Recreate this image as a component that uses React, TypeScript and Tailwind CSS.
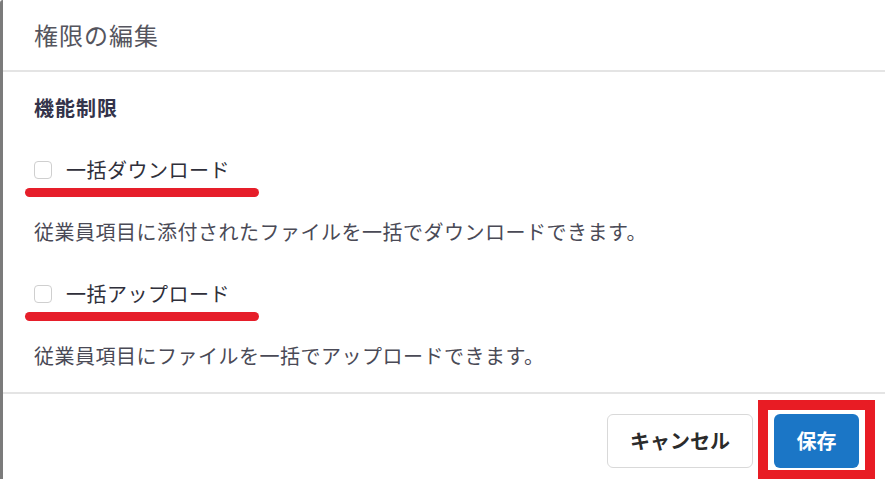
const font = { fontFamily: '"Noto Sans CJK JP", "Noto Sans", sans-serif' };

function Option({ label, description }: { label: string; description: string }) {
  return (
    <div>
      <div className="relative flex h-[28px] items-center">
        <span className="h-[18px] w-[18px] shrink-0 rounded-[4px] border border-[#cfcfcf] bg-white" />
        <span className="ml-[14px] text-[20px] leading-[28px] tracking-[0.5px] text-[#2f2f3a]">{label}</span>
        {/* annotation underline */}
        <span className="absolute left-[-9px] top-[32px] h-[9px] w-[234px] rounded-full bg-[#e61e2a]" />
      </div>
      <p className="mt-[34px] text-[20px] leading-[28px] tracking-[0.5px] text-[#4a4a56]">{description}</p>
    </div>
  );
}

export default function App() {
  return (
    <div className="flex h-[479px] w-[885px] overflow-hidden bg-white" style={font}>
      <div className="w-[3px] shrink-0 rounded-tl-[3px] bg-[#7b7b7b]" />
      <div className="flex flex-1 flex-col">
        <header className="flex h-[72px] items-center border-b-2 border-[#e4e4e4] pl-[31px]">
          <h1 className="text-[24px] leading-[32px] tracking-[1px] text-[#55555e]">権限の編集</h1>
        </header>

        <section className="flex flex-col gap-[34px] border-b-2 border-[#e4e4e4] pl-[31px] pt-[22px] pb-[22px]">
          <h2 className="text-[20px] font-bold leading-[28px] tracking-[1px] text-[#33334a]">機能制限</h2>
          <Option label="一括ダウンロード" description="従業員項目に添付されたファイルを一括でダウンロードできます。" />
          <Option label="一括アップロード" description="従業員項目にファイルを一括でアップロードできます。" />
        </section>

        <footer className="flex flex-1 items-start justify-end gap-[21px] pr-[26px] pt-[20px]">
          <button className="h-[54px] w-[146px] rounded-[6px] border border-[#d9d9d9] bg-white text-[20px] font-bold text-[#2b2b2b]">
            キャンセル
          </button>
          <div className="relative">
            <button className="relative z-10 h-[54px] w-[85px] rounded-[6px] bg-[#1b76c6] text-[20px] font-bold text-white">
              保存
            </button>
            {/* annotation frame */}
            <span className="absolute bottom-[-12px] left-[-16px] right-[-16px] top-[-14px] border-[10px] border-[#e81c24]" />
          </div>
        </footer>
      </div>
    </div>
  );
}
